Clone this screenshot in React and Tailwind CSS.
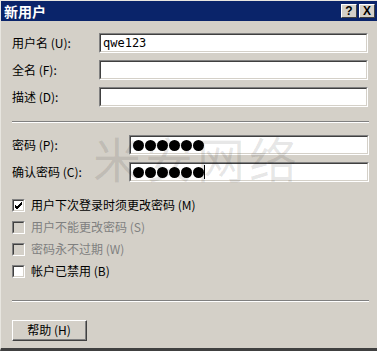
import React from "react";

const font = { fontFamily: '"Noto Sans CJK SC", "Liberation Sans", sans-serif' };

function Sunken({ className = "", children }) {
  return (
    <div className={"border-t border-l border-[#808080] border-b border-r border-b-white border-r-white " + className}>
      <div className="h-full border-t border-l border-[#404040] border-b border-r border-b-[#d4d0c8] border-r-[#d4d0c8] bg-white flex items-center">
        {children}
      </div>
    </div>
  );
}

function Dots({ n }) {
  return (
    <div className="flex gap-[1px] pl-[2px]">
      {Array.from({ length: n }).map((_, i) => (
        <div key={i} className="w-[11px] h-[11px] rounded-full bg-black" />
      ))}
    </div>
  );
}

function Check({ checked, disabled, label }) {
  return (
    <div className="flex items-center h-[22px]">
      <div className="w-[13px] h-[13px] border-t border-l border-[#808080] border-b border-r border-b-white border-r-white">
        <div className={"w-full h-full border-t border-l border-[#404040] border-b border-r border-b-[#d4d0c8] border-r-[#d4d0c8] flex items-center justify-center " + (disabled ? "bg-[#d4d0c8]" : "bg-white")}>
          {checked && (
            <svg width="9" height="9" viewBox="0 0 9 9">
              <path d="M1 4 L3 6 L8 1 M1 5 L3 7 L8 2 M1 6 L3 8 L8 3" stroke="black" strokeWidth="1" fill="none" />
            </svg>
          )}
        </div>
      </div>
      <span className={"ml-[6px] text-[12px] leading-none " + (disabled ? "text-[#808080]" : "text-black")}>{label}</span>
    </div>
  );
}

export default function App() {
  return (
    <div className="w-[377px] h-[351px] bg-[#d4d0c8] relative overflow-hidden border-t border-l border-t-[#e8e6e0] border-l-[#e8e6e0] border-b-[3px] border-b-[#404040]" style={font}>
      <div className="h-[20px] bg-[#0a246a] flex items-center justify-between pl-[3px] pr-[2px]">
        <span className="text-white font-bold text-[14px] leading-none">新用户</span>
        <div className="flex gap-[2px]">
          <div className="w-[16px] h-[14px] bg-[#d4d0c8] border-t border-l border-white border-b border-r border-b-[#404040] border-r-[#404040] flex items-center justify-center text-[12px] font-bold leading-none text-black" style={{ fontFamily: '"Liberation Sans", sans-serif' }}>?</div>
          <div className="w-[16px] h-[14px] bg-[#d4d0c8] border-t border-l border-white border-b border-r border-b-[#404040] border-r-[#404040] flex items-center justify-center text-[12px] font-bold leading-none text-black" style={{ fontFamily: '"Liberation Sans", sans-serif' }}>X</div>
        </div>
      </div>

      <div className="pl-[11px] pr-[8px]">
        <div className="mt-[12px] flex flex-col gap-[7px]">
          <div className="flex items-center h-[20px]">
            <span className="w-[87px] text-[12px]">用户名 (U):</span>
            <Sunken className="w-[269px] h-[20px]">
              <span className="pl-[2px] text-[12px] leading-none" style={{ fontFamily: '"DejaVu Sans Mono", monospace' }}>qwe123</span>
            </Sunken>
          </div>
          <div className="flex items-center h-[20px]">
            <span className="w-[87px] text-[12px]">全名 (F):</span>
            <Sunken className="w-[269px] h-[20px]" />
          </div>
          <div className="flex items-center h-[20px]">
            <span className="w-[87px] text-[12px]">描述 (D):</span>
            <Sunken className="w-[269px] h-[20px]" />
          </div>
        </div>

        <div className="mt-[14px] h-[2px] border-t border-[#808080] border-b border-b-white" />

        <div className="mt-[12px] flex flex-col gap-[7px]">
          <div className="flex items-center h-[20px]">
            <span className="w-[117px] text-[12px]">密码 (P):</span>
            <Sunken className="w-[240px] h-[20px]"><Dots n={6} /></Sunken>
          </div>
          <div className="flex items-center h-[20px]">
            <span className="w-[117px] text-[12px]">确认密码 (C):</span>
            <Sunken className="w-[240px] h-[20px]">
              <Dots n={6} />
              <div className="w-[1px] h-[14px] bg-black" />
            </Sunken>
          </div>
        </div>

        <div className="mt-[12px] flex flex-col">
          <Check checked label="用户下次登录时须更改密码 (M)" />
          <Check disabled label="用户不能更改密码 (S)" />
          <Check disabled label="密码永不过期 (W)" />
          <Check label="帐户已禁用 (B)" />
        </div>

        <div className="mt-[18px] h-[2px] border-t border-[#808080] border-b border-b-white" />

        <div className="mt-[18px] w-[75px] h-[21px] border-t border-l border-white border-b border-r border-b-[#404040] border-r-[#404040]">
          <div className="w-full h-full border-b border-r border-b-[#808080] border-r-[#808080] flex items-center justify-center text-[12px] leading-none">帮助 (H)</div>
        </div>
      </div>

      <div className="absolute left-[92px] top-[132px] text-[48px] leading-none text-black/10 pointer-events-none tracking-[4px]">米安网络</div>
    </div>
  );
}
